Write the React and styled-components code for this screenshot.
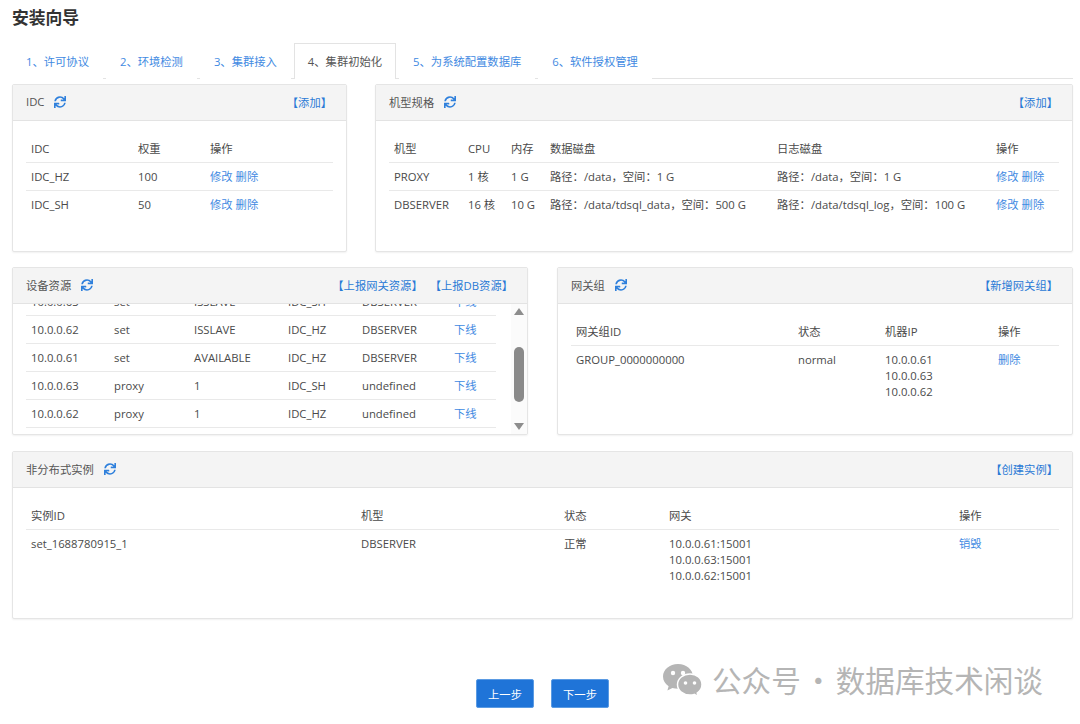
import React from 'react'
import styled, { createGlobalStyle } from 'styled-components'
import { FaSync } from 'react-icons/fa'

const GlobalStyle = createGlobalStyle`
  html, body {
    margin: 0;
    padding: 0;
    background: #fff;
    overflow: hidden;
  }
  body {
    font-family: "Open Sans", "Noto Sans CJK SC", sans-serif;
    font-size: 11.3px;
    color: #4a4a4a;
  }
`

const Page = styled.div`
  position: relative;
  width: 1080px;
  height: 724px;
  box-sizing: border-box;
  padding: 9px 7px 0 12px;
`
const Title = styled.h1`
  margin: 0;
  height: 34px;
  font-size: 16.8px;
  line-height: 18px;
  font-weight: 700;
  color: #333;
`
const TabBar = styled.div`
  display: flex;
  height: 36px;
  box-sizing: border-box;
  border-bottom: 1px solid #e3e3e3;
  margin-bottom: 5px;
`
const Tab = styled.div`
  box-sizing: border-box;
  height: 36px;
  padding: 0 14px;
  margin-right: 3px;
  line-height: 37px;
  white-space: nowrap;
  color: ${p => (p.$active ? '#555' : '#3f8ae2')};
  background: #fff;
  ${p => p.$active && 'border: 1px solid #e3e3e3; border-bottom: none; padding: 0 13px; line-height: 35px;'}
`
const PanelRow = styled.div`
  display: grid;
  grid-template-columns: ${p => p.$cols};
  column-gap: ${p => p.$gap || 0}px;
  margin-bottom: ${p => p.$mb || 0}px;
`
const Panel = styled.section`
  box-sizing: border-box;
  height: 168px;
  border: 1px solid #e5e5e5;
  border-radius: 2px;
  box-shadow: 0 1px 2px rgba(0, 0, 0, 0.06);
  overflow: hidden;
  background: #fff;
`
const PanelHead = styled.header`
  display: flex;
  align-items: center;
  justify-content: space-between;
  box-sizing: border-box;
  height: 36px;
  padding: 0 14px 2px 13px;
  background: #f4f4f4;
  border-bottom: 1px solid #e3e3e3;
`
const HeadTitle = styled.div`
  display: flex;
  align-items: center;
  gap: 10px;
  color: #555;
`
const HeadLinks = styled.div`
  display: flex;
  gap: 7px;
`
const HeadLink = styled.a`
  color: #2a7ad6;
`
const RefreshIcon = styled(FaSync)`
  width: 12px;
  height: 12px;
  color: #2f80dc;
`
const PanelBody = styled.div`
  padding: 14px 13px 0;
`
const ScrollBody = styled.div`
  display: flex;
  height: 131px;
  overflow: hidden;
  padding-left: 13px;
`
const ScrollContent = styled.div`
  width: 470px;
  margin-top: -16px;
`
const ScrollRail = styled.div`
  position: relative;
  width: 16px;
  margin-left: 15px;
  background: #fbfbfb;
`
const ArrowUp = styled.div`
  position: absolute;
  top: 4px;
  left: 3px;
  border-left: 5px solid transparent;
  border-right: 5px solid transparent;
  border-bottom: 7px solid #8d8d8d;
`
const ArrowDown = styled.div`
  position: absolute;
  bottom: 5px;
  left: 3px;
  border-left: 5px solid transparent;
  border-right: 5px solid transparent;
  border-top: 7px solid #8d8d8d;
`
const Thumb = styled.div`
  position: absolute;
  top: 43px;
  left: 3px;
  width: 10px;
  height: 55px;
  border-radius: 5px;
  background: #8a8a8a;
`
const Row = styled.div`
  display: grid;
  grid-template-columns: ${p => p.$cols};
  box-sizing: border-box;
  min-height: 28px;
  padding: 0 5px;
  line-height: 16px;
  border-bottom: 1px solid #e9e9e9;
  ${p => p.$last && 'border-bottom: none;'}
  color: #4a4a4a;
`
const Cell = styled.div`
  padding: 6px 0 5px;
  white-space: nowrap;
`
const ActionLink = styled.a`
  color: #3f8ae2;
  margin-right: 3px;
`
const Footer = styled.div`
  display: flex;
  justify-content: center;
  gap: 17px;
  margin-top: 60px;
`
const StepButton = styled.button`
  width: 58px;
  height: 29px;
  border: 1px solid #5b9be3;
  border-radius: 2px;
  background: #1f74d8;
  color: #fff;
  font: inherit;
  padding: 0;
`
const Watermark = styled.div`
  position: absolute;
  left: 662px;
  top: 660px;
  display: flex;
  align-items: center;
  font-family: "Noto Sans CJK SC", sans-serif;
  font-size: 29.6px;
  line-height: 40px;
  color: #b5b5b5;
  white-space: nowrap;
`
const MarkSlot = styled.div`
  display: flex;
  width: 50px;
`
const Dot = styled.span`
  width: 35px;
  text-align: center;
`

const WeChatMark = () => (
  <svg width="41" height="34" viewBox="0 0 41 34">
    <path d="M16 1C7.5 1 1 6.6 1 13.6c0 4 2.2 7.4 5.6 9.7L5.4 27.5l5-2.5c1.8.5 3.7.8 5.6.8 8.5 0 15-5.5 15-12.2S24.5 1 16 1z" fill="#b5b5b5" />
    <path d="M28 11c-6.8 0-12.5 4.6-12.5 10.5S21.2 32 28 32c1.500 0 2.900-.2 4.200-.6l4 2-1-3.400c3-2 4.800-5 4.800-8.500C40 15.600 34.800 11 28 11z" fill="#b5b5b5" stroke="#fff" strokeWidth="1.5" />
    <circle cx="11" cy="10" r="2.2" fill="#fff" />
    <circle cx="21" cy="10" r="2.2" fill="#fff" />
    <circle cx="23.5" cy="20" r="1.8" fill="#fff" />
    <circle cx="32.5" cy="20" r="1.8" fill="#fff" />
  </svg>
)

const DataTable = ({ cols, head, rows, closed }) => (
  <>
    {head && (
      <Row $cols={cols}>
        {head.map(h => <Cell key={h}>{h}</Cell>)}
      </Row>
    )}
    {rows.map((row, i) => (
      <Row $cols={cols} key={i} $last={!closed && i === rows.length - 1}>
        {row.map((c, j) => <Cell key={j}>{c}</Cell>)}
      </Row>
    ))}
  </>
)

const editLinks = (
  <>
    <ActionLink>修改</ActionLink>
    <ActionLink>删除</ActionLink>
  </>
)
const offline = <ActionLink>下线</ActionLink>

const tabs = ['1、许可协议', '2、环境检测', '3、集群接入', '4、集群初始化', '5、为系统配置数据库', '6、软件授权管理']

const PanelHeader = ({ title, links }) => (
  <PanelHead>
    <HeadTitle>{title}<RefreshIcon /></HeadTitle>
    <HeadLinks>
      {links.map(l => <HeadLink key={l}>【{l}】</HeadLink>)}
    </HeadLinks>
  </PanelHead>
)

export default function App() {
  return (
    <Page>
      <GlobalStyle />
      <Title>安装向导</Title>
      <TabBar>
        {tabs.map((t, i) => <Tab key={t} $active={i === 3}>{t}</Tab>)}
      </TabBar>

      <PanelRow $cols="335px 698px" $gap={28} $mb={15}>
        <Panel>
          <PanelHeader title="IDC" links={['添加']} />
          <PanelBody>
            <DataTable
              cols="107px 72px 1fr"
              head={['IDC', '权重', '操作']}
              rows={[
                ['IDC_HZ', '100', editLinks],
                ['IDC_SH', '50', editLinks],
              ]}
            />
          </PanelBody>
        </Panel>
        <Panel>
          <PanelHeader title="机型规格" links={['添加']} />
          <PanelBody>
            <DataTable
              cols="74px 43px 39px 227px 219px 1fr"
              head={['机型', 'CPU', '内存', '数据磁盘', '日志磁盘', '操作']}
              rows={[
                ['PROXY', '1 核', '1 G', '路径：/data，空间：1 G', '路径：/data，空间：1 G', editLinks],
                ['DBSERVER', '16 核', '10 G', '路径：/data/tdsql_data，空间：500 G', '路径：/data/tdsql_log，空间：100 G', editLinks],
              ]}
            />
          </PanelBody>
        </Panel>
      </PanelRow>

      <PanelRow $cols="516px 516px" $gap={29} $mb={16}>
        <Panel>
          <PanelHeader title="设备资源" links={['上报网关资源', '上报DB资源']} />
          <ScrollBody>
            <ScrollContent>
              <DataTable
                closed
                cols="83px 80px 94px 74px 92px 1fr"
                rows={[
                  ['10.0.0.63', 'set', 'ISSLAVE', 'IDC_SH', 'DBSERVER', offline],
                  ['10.0.0.62', 'set', 'ISSLAVE', 'IDC_HZ', 'DBSERVER', offline],
                  ['10.0.0.61', 'set', 'AVAILABLE', 'IDC_HZ', 'DBSERVER', offline],
                  ['10.0.0.63', 'proxy', '1', 'IDC_SH', 'undefined', offline],
                  ['10.0.0.62', 'proxy', '1', 'IDC_HZ', 'undefined', offline],
                ]}
              />
            </ScrollContent>
            <ScrollRail>
              <ArrowUp />
              <Thumb />
              <ArrowDown />
            </ScrollRail>
          </ScrollBody>
        </Panel>
        <Panel>
          <PanelHeader title="网关组" links={['新增网关组']} />
          <PanelBody>
            <Row $cols="222px 87px 113px 1fr">
              <Cell>网关组ID</Cell><Cell>状态</Cell><Cell>机器IP</Cell><Cell>操作</Cell>
            </Row>
            <Row $cols="222px 87px 113px 1fr" $last>
              <Cell>GROUP_0000000000</Cell>
              <Cell>normal</Cell>
              <Cell>10.0.0.61<br />10.0.0.63<br />10.0.0.62</Cell>
              <Cell><ActionLink>删除</ActionLink></Cell>
            </Row>
          </PanelBody>
        </Panel>
      </PanelRow>

      <Panel>
        <PanelHeader title="非分布式实例" links={['创建实例']} />
        <PanelBody>
          <Row $cols="330px 203px 105px 290px 1fr">
            <Cell>实例ID</Cell><Cell>机型</Cell><Cell>状态</Cell><Cell>网关</Cell><Cell>操作</Cell>
          </Row>
          <Row $cols="330px 203px 105px 290px 1fr" $last>
            <Cell>set_1688780915_1</Cell>
            <Cell>DBSERVER</Cell>
            <Cell>正常</Cell>
            <Cell>10.0.0.61:15001<br />10.0.0.63:15001<br />10.0.0.62:15001</Cell>
            <Cell><ActionLink>销毁</ActionLink></Cell>
          </Row>
        </PanelBody>
      </Panel>

      <Footer>
        <StepButton>上一步</StepButton>
        <StepButton>下一步</StepButton>
      </Footer>

      <Watermark>
        <MarkSlot><WeChatMark /></MarkSlot>
        <span>公众号</span>
        <Dot>·</Dot>
        <span>数据库技术闲谈</span>
      </Watermark>
    </Page>
  )
}
